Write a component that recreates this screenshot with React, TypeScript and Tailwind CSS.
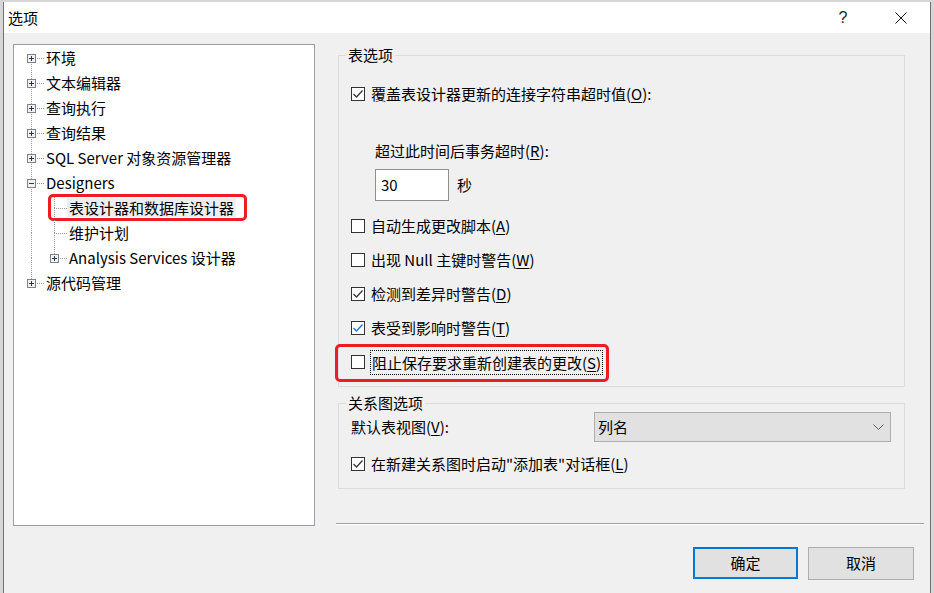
import type { ReactNode } from "react";

type Row = {
  label: string;
  level: 0 | 1;
  box?: "plus" | "minus";
  cols: [boolean, boolean][];
  selected?: boolean;
};

const rows: Row[] = [
  { label: "环境", level: 0, box: "plus", cols: [[false, true]] },
  { label: "文本编辑器", level: 0, box: "plus", cols: [[true, true]] },
  { label: "查询执行", level: 0, box: "plus", cols: [[true, true]] },
  { label: "查询结果", level: 0, box: "plus", cols: [[true, true]] },
  { label: "SQL Server 对象资源管理器", level: 0, box: "plus", cols: [[true, true]] },
  { label: "Designers", level: 0, box: "minus", cols: [[true, true]] },
  { label: "表设计器和数据库设计器", level: 1, cols: [[true, true], [true, true]], selected: true },
  { label: "维护计划", level: 1, cols: [[true, true], [true, true]] },
  { label: "Analysis Services 设计器", level: 1, box: "plus", cols: [[true, true], [true, false]] },
  { label: "源代码管理", level: 0, box: "plus", cols: [[true, false]] },
];

function TreeGlyph({ row }: { row: Row }) {
  const w = row.level === 0 ? 24 : 47;
  const cx = 11 + 23 * row.level;
  const dot = { stroke: "#9a9a9a", strokeDasharray: "1 1" };
  return (
    <svg width={w} height={25} className="shrink-0" shapeRendering="crispEdges">
      {row.cols.map(([top, bottom], c) => {
        const x = 11 + 23 * c + 0.5;
        return (
          <g key={c}>
            {top && <line x1={x} y1={0} x2={x} y2={13} {...dot} />}
            {bottom && <line x1={x} y1={13} x2={x} y2={25} {...dot} />}
          </g>
        );
      })}
      <line x1={cx} y1={13.5} x2={w} y2={13.5} {...dot} />
      {row.box && (
        <g>
          <rect x={cx - 3.5} y={9.5} width={8} height={8} fill="#f2f2f2" stroke="#7f8285" />
          <line x1={cx - 2} y1={13.5} x2={cx + 3} y2={13.5} stroke="#1e395b" />
          {row.box === "plus" && (
            <line x1={cx + 0.5} y1={11} x2={cx + 0.5} y2={16} stroke="#1e395b" />
          )}
        </g>
      )}
    </svg>
  );
}

function U({ children }: { children: ReactNode }) {
  return <span className="underline underline-offset-[2px] decoration-1">{children}</span>;
}

function CheckBox({ checked, blue }: { checked?: boolean; blue?: boolean }) {
  return (
    <span className="flex h-[14px] w-[14px] shrink-0 items-center justify-center border border-[#333] bg-white">
      {checked && (
        <svg width="12" height="12" viewBox="0 0 12 12">
          <polyline
            points="1.5,6 4.5,9 10.5,2.5"
            fill="none"
            stroke={blue ? "#1a73d0" : "#3a3a3a"}
            strokeWidth="1.3"
          />
        </svg>
      )}
    </span>
  );
}

function CheckRow({ checked, blue, children, className = "" }: { checked?: boolean; blue?: boolean; children: ReactNode; className?: string }) {
  return (
    <div className={`flex h-[24px] items-center gap-[6px] ${className}`}>
      <CheckBox checked={checked} blue={blue} />
      <span className="leading-[20px]">{children}</span>
    </div>
  );
}

export default function App() {
  return (
    <div className="h-[593px] w-[934px] overflow-hidden bg-[#d6d6d6] pt-[2px] font-['Noto_Sans_CJK_SC',sans-serif] text-[15px] text-black">
      <div className="ml-[3px] flex h-[591px] w-[928px] flex-col border-x border-[#707070] bg-[#f0f0f0]">
        {/* title bar */}
        <div className="flex h-[31px] items-center bg-white pl-[4px]">
          <span className="leading-[20px]">选项</span>
          <div className="ml-auto flex items-center gap-[18px] pr-[9px]">
            <span className="flex w-[40px] justify-center font-['Liberation_Sans',sans-serif] text-[16px] font-light text-[#222]">?</span>
            <span className="flex w-[40px] justify-center">
              <svg width="12" height="12" viewBox="0 0 12 12">
                <path d="M0.5 0.5 L11.5 11.5 M11.5 0.5 L0.5 11.5" stroke="#111" strokeWidth="1" />
              </svg>
            </span>
          </div>
        </div>

        {/* body */}
        <div className="flex flex-1">
          {/* tree */}
          <div className="ml-[9px] mt-[11px] h-[482px] w-[302px] border border-[#9b9ea3] bg-white pl-[6px]">
            {rows.map((row) => (
              <div key={row.label} className="relative flex h-[25px] items-center">
                <TreeGlyph row={row} />
                <span className={`px-[2px] leading-[19px] whitespace-nowrap ${row.selected ? "bg-[#eeeeee]" : ""}`}>
                  {row.label}
                </span>
                {row.selected && (
                  <span className="pointer-events-none absolute left-[28px] top-[-1px] h-[27px] w-[199px] rounded-[5px] border-[3px] border-[#ee1c24]" />
                )}
              </div>
            ))}
          </div>

          {/* right column */}
          <div className="ml-[21px] flex w-[588px] flex-col">
            <fieldset className="ml-[2px] mt-[12px] h-[342px] w-[567px] border border-[#dcdcdc] p-0">
              <legend className="ml-[7px] px-[2px] leading-[20px]">表选项</legend>
              <div className="flex flex-col pl-[12px] pt-[17px]">
                <CheckRow checked>
                  覆盖表设计器更新的连接字符串超时值(<U>O</U>):
                </CheckRow>
                <div className="ml-[24px] mt-[35px] leading-[20px]">
                  超过此时间后事务超时(<U>R</U>):
                </div>
                <div className="ml-[24px] mt-[8px] flex items-center">
                  <div className="flex h-[32px] w-[74px] items-center border border-[#8f8f8f] bg-white pl-[5px]">30</div>
                  <span className="ml-[8px]">秒</span>
                </div>
                <CheckRow className="mt-[13px]">
                  自动生成更改脚本(<U>A</U>)
                </CheckRow>
                <CheckRow className="mt-[10px]">
                  出现 Null 主键时警告(<U>W</U>)
                </CheckRow>
                <CheckRow checked className="mt-[10px]">
                  检测到差异时警告(<U>D</U>)
                </CheckRow>
                <CheckRow checked blue className="mt-[10px]">
                  表受到影响时警告(<U>T</U>)
                </CheckRow>
                <div className="relative mt-[10px] flex h-[24px] items-center gap-[5px]">
                  <CheckBox />
                  <span className="border border-dotted border-black px-[1px] leading-[23px]">
                    阻止保存要求重新创建表的更改(<U>S</U>)
                  </span>
                  <span className="pointer-events-none absolute left-[-16px] top-[-6px] h-[38px] w-[274px] rounded-[5px] border-[3px] border-[#ee1c24]" />
                </div>
              </div>
            </fieldset>

            <fieldset className="ml-[2px] mt-[7px] w-[567px] border border-[#dcdcdc] p-0">
              <legend className="ml-[7px] px-[2px] leading-[18px]">关系图选项</legend>
              <div className="flex flex-col pb-[12px] pl-[12px] pr-[13px]">
                <div className="flex items-center justify-between">
                  <span className="leading-[20px]">
                    默认表视图(<U>V</U>):
                  </span>
                  <div className="flex h-[30px] w-[297px] items-center border border-[#adadad] bg-[#e1e1e1] pl-[3px] pr-[6px]">
                    <span>列名</span>
                    <svg className="ml-auto" width="11" height="7" viewBox="0 0 11 7">
                      <polyline points="0.5,0.5 5.5,5.5 10.5,0.5" fill="none" stroke="#606060" strokeWidth="1" />
                    </svg>
                  </div>
                </div>
                <CheckRow checked className="mt-[10px]">
                  在新建关系图时启动"添加表"对话框(<U>L</U>)
                </CheckRow>
              </div>
            </fieldset>

            <div className="mt-[34px] h-[2px] w-full border-t border-b border-t-[#a0a0a0] border-b-white" />

            <div className="mt-[22px] flex justify-end gap-[10px] pr-[10px]">
              <button className="flex h-[32px] w-[105px] items-center justify-center border-2 border-[#0078d7] bg-[#e1e1e1]">
                确定
              </button>
              <button className="flex h-[33px] w-[106px] items-center justify-center border border-[#adadad] bg-[#e1e1e1]">
                取消
              </button>
            </div>
          </div>
        </div>
      </div>
    </div>
  );
}
